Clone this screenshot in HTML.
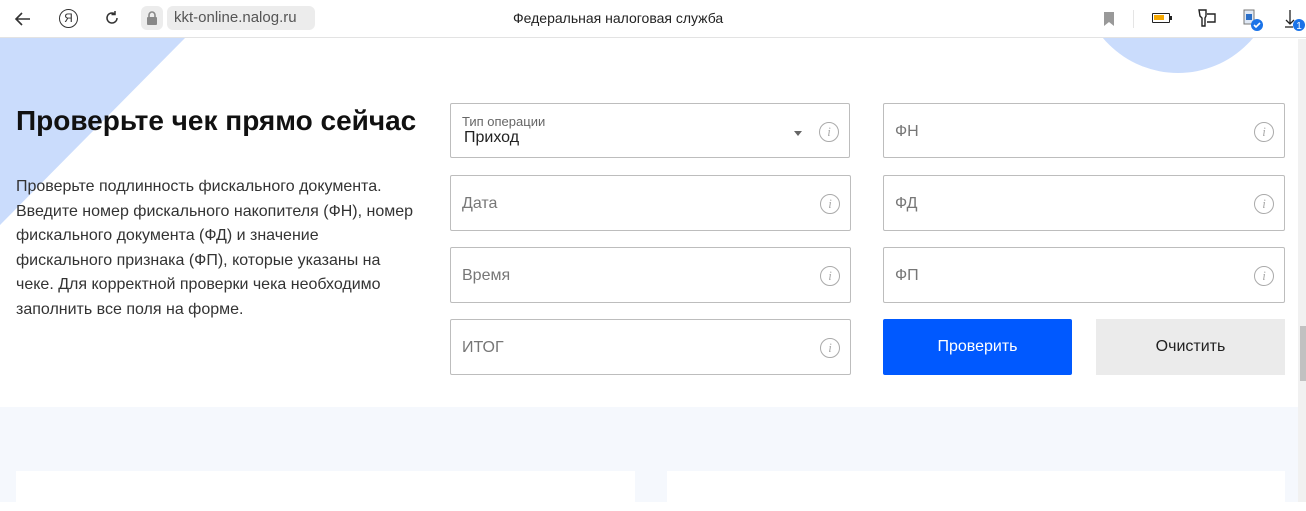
<!DOCTYPE html>
<html><head><meta charset="utf-8"><style>
*{margin:0;padding:0;box-sizing:border-box}
body{width:1306px;height:502px;overflow:hidden;background:#fff;font-family:"Liberation Sans",Arial,sans-serif;position:relative;color:#222}
.bar{position:absolute;left:0;top:0;width:1306px;height:38px;background:#fff;border-bottom:1px solid #e3e3e3;z-index:5}
.abs{position:absolute}
.f{position:absolute;border:1px solid #bdbdbd;background:#fff;border-radius:2px}
.f .ph{position:absolute;left:11px;top:19px;font-size:16px;color:#777}
.f .i{position:absolute;right:10px;top:18px;width:20px;height:20px;border:1px solid #aaa;border-radius:50%;color:#aaa;font:italic 13px "Liberation Serif",serif;text-align:center;line-height:18px}
</style></head><body>
<div class="bar">
 <svg class="abs" style="left:14px;top:10px" width="18" height="18" viewBox="0 0 18 18"><path d="M16 9H3M8 3L2 9l6 6" fill="none" stroke="#333" stroke-width="1.6"/></svg>
 <div class="abs" style="left:59px;top:9px;width:19px;height:19px;border:1.5px solid #333;border-radius:50%;font-size:12px;text-align:center;line-height:16px;color:#333">Я</div>
 <svg class="abs" style="left:103px;top:9px" width="18" height="18" viewBox="0 0 18 18"><path d="M14 9a5 5 0 1 1-2-4M12 2v3.5h-3.5" fill="none" stroke="#333" stroke-width="1.5"/></svg>
 <div class="abs" style="left:141px;top:6px;width:22px;height:24px;background:#ececec;border-radius:6px"></div>
 <svg class="abs" style="left:146px;top:11px" width="12" height="14" viewBox="0 0 12 14"><path d="M3 6V4a3 3 0 0 1 6 0v2" fill="none" stroke="#888" stroke-width="1.6"/><rect x="1" y="6" width="10" height="8" rx="1" fill="#888"/></svg>
 <div class="abs" style="left:167px;top:6px;width:148px;height:24px;background:#ececec;border-radius:6px;font-size:15px;color:#555;line-height:24px;padding-left:7px">kkt-online.nalog.ru</div>
 <div class="abs" style="left:513px;top:10px;font-size:14px;color:#222">Федеральная налоговая служба</div>
 <svg class="abs" style="left:1103px;top:11px" width="12" height="16" viewBox="0 0 12 16"><path d="M1 1h10v14l-5-4-5 4z" fill="#999"/></svg>
 <div class="abs" style="left:1133px;top:10px;width:1px;height:18px;background:#e5e5e5"></div>
 <div class="abs" style="left:1152px;top:13px;width:18px;height:10px;border:1.5px solid #222;border-radius:1px"><div style="margin:1px;width:10px;height:5px;background:#f5a800"></div></div>
 <div class="abs" style="left:1170px;top:16px;width:2px;height:4px;background:#222"></div>
 <svg class="abs" style="left:1197px;top:8px" width="22" height="20" viewBox="0 0 22 20"><path d="M2 2h7v6l-1 2v8H5V10L3 8z M10 6h8v8h-8" fill="none" stroke="#222" stroke-width="1.4"/></svg>
 <svg class="abs" style="left:1242px;top:8px" width="24" height="24" viewBox="0 0 24 24"><rect x="2" y="2" width="10" height="14" fill="#dfe8f5" stroke="#777"/><rect x="4" y="6" width="6" height="6" fill="#2a6fc9"/><circle cx="15" cy="17" r="6" fill="#1a73e8"/><path d="M12 17l2 2 4-4" stroke="#fff" stroke-width="1.6" fill="none"/></svg>
 <svg class="abs" style="left:1284px;top:8px" width="22" height="24" viewBox="0 0 22 24"><path d="M6 2v14M2 12l4 4 4-4M1 19h8" stroke="#222" stroke-width="1.3" fill="none"/><circle cx="15" cy="17" r="6" fill="#1a73e8"/><text x="15" y="21" font-size="10" fill="#fff" text-anchor="middle" font-family="Liberation Sans">1</text></svg>
</div>
<svg class="abs" style="left:0;top:0" width="1306" height="410"><polygon points="0,38 185,38 0,225" fill="#cadcfc"/><circle cx="1178" cy="-25" r="98" fill="#cadcfc"/></svg>
<div class="abs" style="left:16px;top:105px;font-size:28px;font-weight:bold;color:#111;white-space:nowrap">Проверьте чек прямо сейчас</div>
<div class="abs" style="left:16px;top:175px;width:402px;font-size:16px;line-height:24.5px;color:#333">Проверьте подлинность фискального документа. Введите номер фискального накопителя (ФН), номер фискального документа (ФД) и значение фискального признака (ФП), которые указаны на чеке. Для корректной проверки чека необходимо заполнить все поля на форме.</div>

<div class="f" style="left:450px;top:103px;width:400px;height:55px"><div class="abs" style="left:11px;top:10px;font-size:13px;color:#666">Тип операции</div><div class="abs" style="left:13px;top:25px;font-size:16px;color:#222">Приход</div><div class="abs" style="right:47px;top:27px;border:4px solid transparent;border-top:5px solid #666"></div><div class="i">i</div></div>
<div class="f" style="left:450px;top:175px;width:401px;height:56px"><div class="ph">Дата</div><div class="i">i</div></div>
<div class="f" style="left:450px;top:247px;width:401px;height:56px"><div class="ph">Время</div><div class="i">i</div></div>
<div class="f" style="left:450px;top:319px;width:401px;height:56px"><div class="ph">ИТОГ</div><div class="i">i</div></div>
<div class="f" style="left:883px;top:103px;width:402px;height:55px"><div class="ph">ФН</div><div class="i">i</div></div>
<div class="f" style="left:883px;top:175px;width:402px;height:56px"><div class="ph">ФД</div><div class="i">i</div></div>
<div class="f" style="left:883px;top:247px;width:402px;height:56px"><div class="ph">ФП</div><div class="i">i</div></div>
<div class="abs" style="left:883px;top:319px;width:189px;height:56px;background:#0059ff;border-radius:2px;color:#fff;font-size:16px;text-align:center;line-height:56px">Проверить</div>
<div class="abs" style="left:1096px;top:319px;width:189px;height:56px;background:#ebebeb;color:#222;font-size:16px;text-align:center;line-height:56px">Очистить</div>

<div class="abs" style="left:0;top:407px;width:1298px;height:95px;background:#f5f8fd"></div>
<div class="abs" style="left:16px;top:471px;width:619px;height:40px;background:#fff"></div>
<div class="abs" style="left:667px;top:471px;width:618px;height:40px;background:#fff"></div>
<div class="abs" style="left:1298px;top:39px;width:8px;height:463px;background:#f1f1f1"></div>
<div class="abs" style="left:1300px;top:326px;width:6px;height:55px;background:#c1c1c1"></div>
</body></html>
